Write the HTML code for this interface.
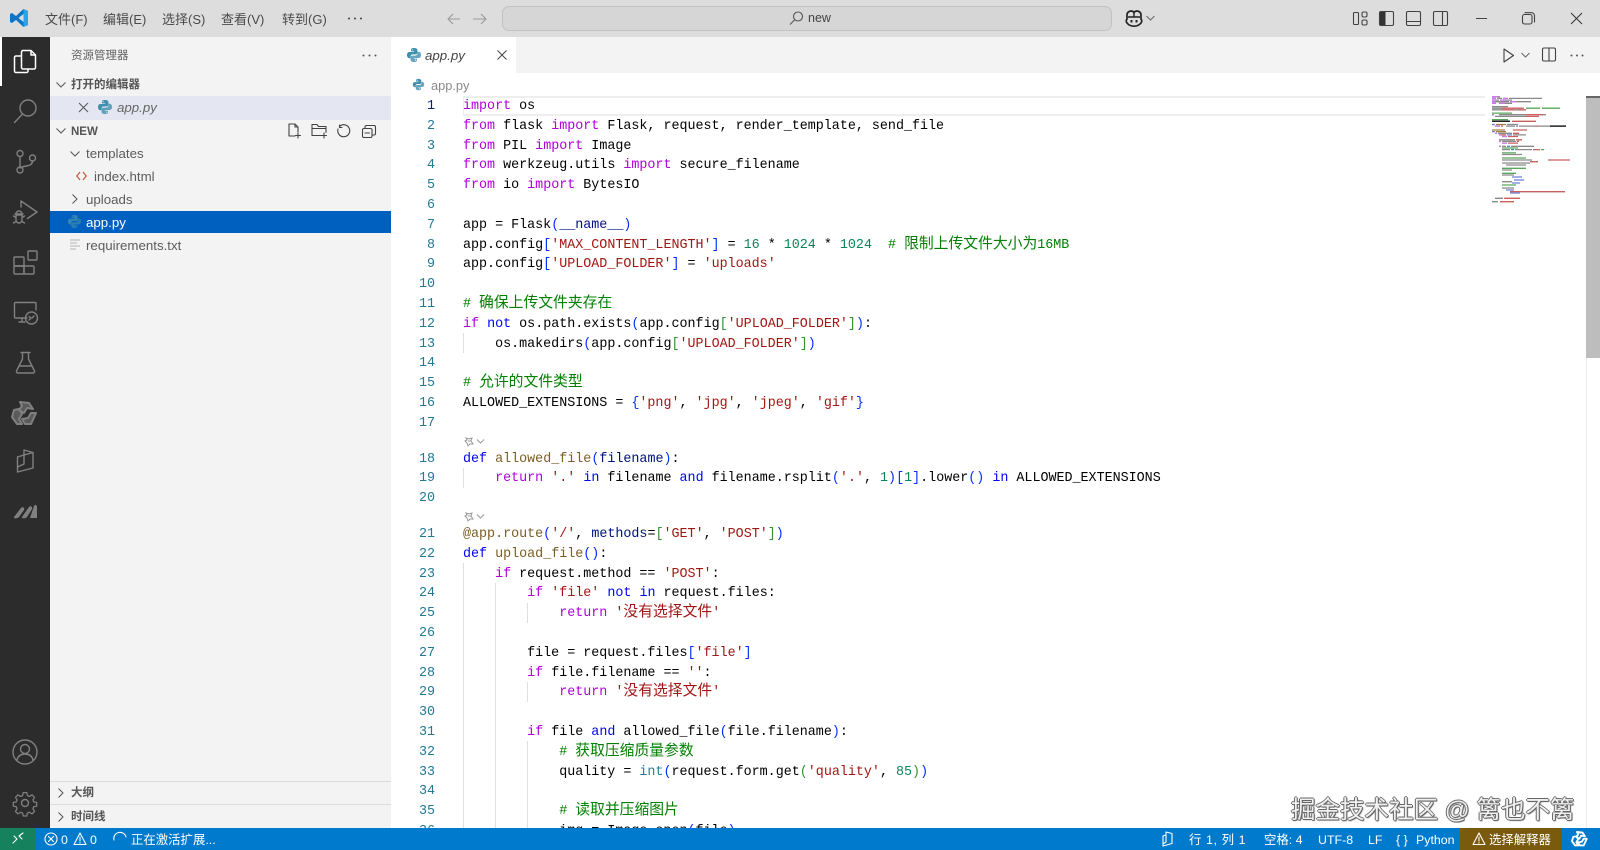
<!DOCTYPE html>
<html lang="zh"><head><meta charset="utf-8"><title>app.py</title>
<style>
*{box-sizing:border-box}
html{background:#fff}
html,body{margin:0;padding:0;width:1600px;height:850px;overflow:hidden}
body{background:#fff;font-family:"Liberation Sans","Noto Sans CJK SC",sans-serif;color:#333;filter:blur(.3px)}
.a{position:absolute}
.t{position:absolute;white-space:pre;line-height:20px;height:20px}
svg{position:absolute;overflow:visible}
.ic{fill:none;stroke:#808080;stroke-width:1.4;stroke-linecap:round;stroke-linejoin:round}
.d{fill:none;stroke:#424242;stroke-width:1.1;stroke-linecap:round;stroke-linejoin:round}
.w{fill:none;stroke:#fff;stroke-width:1.1;stroke-linecap:round;stroke-linejoin:round}
#code{position:absolute;left:0;top:97px;width:1586px;height:731px;overflow:hidden;font-family:"Liberation Mono","Noto Sans CJK SC",monospace;font-size:13.36px;color:#000}
.l{position:relative;height:19.8px;line-height:19.8px;white-space:pre;padding-left:463px}
.l i{position:absolute;left:391px;width:44px;text-align:right;font-style:normal;color:#237893}
.lens{height:16px;position:relative}
.k{color:#af00db}.b{color:#0000ff}.f{color:#795e26}.s{color:#a31515}.c{color:#008000}.n{color:#098658}.v{color:#001080}.y{color:#267f99}.p1{color:#0431fa}.p2{color:#319331}
.z{font-size:14.8px;font-family:"Noto Sans CJK SC",sans-serif;line-height:14px}
.g{position:absolute;width:1px;background:#dfdfdf}
.m{font-size:13px;color:#4a4a4a;top:10px}
.sb{font-size:12.4px;color:#fff;top:830px}
.tree{font-size:13.3px;color:#5c5c5c}
.h{font-size:11.5px;font-weight:bold;color:#555}
#wm{position:absolute;left:1291px;top:794px;font-size:24.5px;line-height:34px;white-space:pre;color:#f0f0f0;text-shadow:1px 0 0 #666,-1px 0 0 #666,0 1px 0 #666,0 -1px 0 #666,1px 1px 1px #444}
</style></head><body>
<svg width="0" height="0" style="position:absolute"><defs>
<symbol id="py" viewBox="0 0 16 16"><path fill="#3f8fae" d="M7.9 1C5.2 1 5 2.1 5 3v1.4h3.2V5H3.4C2 5 1 6.1 1 8s1 3.2 2.2 3.2H4.500V9.600c0-1.200 1-2.200 2.200-2.200h2.900c1 0 1.800-.8 1.800-1.800V3c0-1.200-1.200-2-3.500-2zM6.400 2.200a.6.600 0 110 1.200.6.600 0 010-1.200z"/><path fill="#3f8fae" opacity=".8" d="M8.100 15c2.700 0 2.900-1.100 2.900-2v-1.400H7.800V11h4.800c1.400 0 2.400-1.100 2.400-3s-1-3.200-2.200-3.200h-1.300v1.600c0 1.200-1 2.200-2.200 2.200H6.400c-1 0-1.800.8-1.800 1.800V13c0 1.200 1.200 2 3.500 2zm1.500-1.200a.6.600 0 110-1.200.6.600 0 010 1.200z"/></symbol>
</defs></svg>

<!-- title bar -->
<div class="a" style="left:0;top:0;width:1600px;height:37px;background:#dddddd"></div>
<svg style="left:9px;top:8px" width="20" height="20" viewBox="0 0 20 20"><path fill="#0f74c4" d="M14.500 1 7 8 3 5 1 6v8l2 1 4-3 7.500 7L19 17V3zM14.500 6v8L9.500 10z"/><path fill="#29a3ea" d="M14.500 1 19 3v14l-4.500 2V14V6z"/></svg>
<div class="t m" style="left:45px">文件(F)</div>
<div class="t m" style="left:103px">编辑(E)</div>
<div class="t m" style="left:162px">选择(S)</div>
<div class="t m" style="left:221px">查看(V)</div>
<div class="t m" style="left:282px">转到(G)</div>
<svg style="left:347px;top:17px" width="16" height="3"><circle cx="2" cy="1.500" r="1" fill="#444"/><circle cx="8" cy="1.500" r="1" fill="#444"/><circle cx="14" cy="1.500" r="1" fill="#444"/></svg>
<svg style="left:446px;top:11px" width="50" height="16"><path d="M14 8H2M7 3 2 8l5 5M27 8h13M35 3l5 5-5 5" fill="none" stroke="#9a9a9a" stroke-width="1.100"/></svg>
<div class="a" style="left:502px;top:6px;width:610px;height:25px;background:#d6d6d6;border:1px solid #c2c2c2;border-radius:7px"></div>
<svg style="left:788px;top:10px" width="16" height="16"><circle cx="10" cy="6.500" r="4.500" fill="none" stroke="#555" stroke-width="1.100"/><path d="M6.500 10 2 14.500" stroke="#555" stroke-width="1.100"/></svg>
<div class="t" style="left:808px;top:8px;font-size:12.500px;color:#444">new</div>
<svg style="left:1125px;top:10px" width="18" height="17" viewBox="0 0 18 17"><path d="M2 9c-1 1-1 3 0 4 2 2.500 4 3.200 7 3.200S14 15.500 16 13c1-1 1-3 0-4V5c0-2.500-2-4-4-4-1.300 0-2.400.6-3 1.500C8.400 1.600 7.300 1 6 1 4 1 2 2.500 2 5z" fill="#dddddd" stroke="#222" stroke-width="1.700"/><path d="M9 3v4M3 7h12" stroke="#222" stroke-width="1.400"/><path d="M6.500 10v2.500M11.500 10v2.500" stroke="#222" stroke-width="1.900"/></svg>
<svg style="left:1146px;top:15px" width="9" height="6"><path d="M.5 1 4.500 5 8.500 1" fill="none" stroke="#666"/></svg>
<svg style="left:1353px;top:11px" width="15" height="15"><rect x=".5" y="1.500" width="5" height="12" rx="1" class="d"/><rect x="9" y="1" width="5" height="5" rx="1.500" class="d"/><rect x="9" y="9" width="5" height="5" rx="1.500" class="d"/></svg>
<svg style="left:1379px;top:11px" width="15" height="15"><rect x=".5" y=".5" width="14" height="14" rx="1.500" class="d"/><rect x="1" y="1" width="5.500" height="13" fill="#333"/></svg>
<svg style="left:1406px;top:11px" width="15" height="15"><rect x=".5" y=".5" width="14" height="14" rx="1.500" class="d"/><path d="M1 10.500h13" class="d"/></svg>
<svg style="left:1433px;top:11px" width="15" height="15"><rect x=".5" y=".5" width="14" height="14" rx="1.500" class="d"/><path d="M9.500 1v13" class="d"/></svg>
<svg style="left:1476px;top:18px" width="11" height="2"><path d="M0 .5h11" stroke="#444" stroke-width="1"/></svg>
<svg style="left:1522px;top:12px" width="13" height="13"><rect x=".5" y="2.500" width="9.500" height="9.500" rx="2" class="d"/><path d="M3 .7h6.500a3 3 0 013 3V10" class="d"/></svg>
<svg style="left:1570px;top:12px" width="13" height="13"><path d="M1 1l11 11M12 1 1 12" stroke="#333" stroke-width="1"/></svg>

<!-- activity bar -->
<div class="a" style="left:0;top:37px;width:50px;height:791px;background:#2c2c2c"></div>
<div class="a" style="left:0;top:37px;width:2px;height:49px;background:#fff"></div>
<svg style="left:13px;top:49px" width="24" height="25" viewBox="0 0 24 25"><path d="M10 1.500h8l4.500 4.500v12.500a1.500 1.500 0 01-1.500 1.500H10a1.500 1.500 0 01-1.500-1.500V3A1.500 1.500 0 0110 1.500zM18 1.500V6h4.500M8.500 7H3A1.500 1.500 0 001.500 8.500V22A1.500 1.500 0 003 23.500h10.500a1.500 1.500 0 001.500-1.500v-2" fill="none" stroke="#fff" stroke-width="1.500" stroke-linejoin="round"/></svg>
<svg style="left:13px;top:99px" width="25" height="25"><circle cx="15" cy="9" r="8" class="ic"/><path d="M9.500 15 1.500 23.500" class="ic"/></svg>
<svg style="left:15px;top:149px" width="22" height="26"><circle cx="5" cy="4.500" r="3" class="ic"/><circle cx="5" cy="21" r="3" class="ic"/><circle cx="17.500" cy="9" r="3" class="ic"/><path d="M5 7.500v10.500M17.500 12c0 3-3 4.500-6 5s-5 1-6.500 2" class="ic"/></svg>
<svg style="left:12px;top:199px" width="26" height="26"><path d="M9 2l16 11-9.500 6.500M9 2v6" class="ic"/><path d="M3 15h8M4 15a3 3 0 016 0v1H4zM4 16h6v5a3 3 0 01-6 0zM1.500 17l2.500 1.500M12.500 17 10 18.500M1.500 24l2.500-1.500M12.500 24 10 22.500" class="ic" stroke-width="1.200"/></svg>
<svg style="left:13px;top:250px" width="25" height="25"><rect x="1" y="7" width="10" height="9" class="ic" rx="1"/><rect x="1" y="16" width="10" height="8" class="ic" rx="1"/><rect x="11" y="16" width="10" height="8" class="ic" rx="1"/><rect x="15" y="1" width="9" height="9" class="ic" rx="1"/></svg>
<svg style="left:13px;top:301px" width="25" height="24"><path d="M14 17H2.500a1 1 0 01-1-1V2.500a1 1 0 011-1H22a1 1 0 011 1V9M6 21h6M9 17v4" class="ic"/><circle cx="18.500" cy="17" r="6" class="ic"/><path d="M16 19l2-2-2-1.500M21 15l-2 2" class="ic" stroke-width="1"/></svg>
<svg style="left:15px;top:351px" width="21" height="23"><path d="M6 1.500h9M7.500 1.500V8L1.500 20a1.500 1.500 0 001.300 2h15.400a1.500 1.500 0 001.300-2l-6-12V1.500M4.500 15h12" class="ic"/></svg>
<svg style="left:12px;top:401px" width="26" height="25" viewBox="0 0 26 25"><path d="M8 1l9 1 4 6-6-1-3 5-5-3 3-4zM2 9l5-1 3 5-3 5 3 5-5 0-5-7zM24 12l-5 0-3 5-6 1 3 5 6 0z" fill="#5a5a5a" stroke="#808080" stroke-width="2" stroke-linejoin="round"/></svg>
<svg style="left:16px;top:448px" width="19" height="26"><path d="M1.500 9 8 7V2l9 2.500V20L1.500 24zM8 7l9-2.500M1.500 9v15" class="ic"/><path d="M8 7v9L1.500 19" class="ic"/></svg>
<svg style="left:13px;top:503px" width="25" height="16"><path d="M1 14 8 5c1.500-1.500 4-.5 3 2L6 14c-1 1.500-6 2-5 0zM9 14l7-10c1.500-1.500 3.500-.5 3 2l-5 8c-1 1.500-6 2-5 0zM17 15l4-12c1-2 3-1 3 1v11z" fill="#808080"/></svg>
<svg style="left:12px;top:739px" width="26" height="26"><circle cx="13" cy="13" r="12" class="ic"/><circle cx="13" cy="10" r="4.500" class="ic"/><path d="M5 21c1-4 4-6 8-6s7 2 8 6" class="ic"/></svg>
<svg style="left:12px;top:790px" width="26" height="26" viewBox="0 0 26 26"><path d="M11 1.500h4l.7 3.300 2.200.9 2.900-1.800 2.800 2.800-1.800 2.900.9 2.200 3.300.7v4l-3.300.7-.9 2.200 1.800 2.900-2.800 2.800-2.900-1.800-2.200.9-.7 3.300h-4l-.7-3.300-2.200-.9-2.900 1.800-2.800-2.800 1.800-2.900-.9-2.200-3.300-.7v-4l3.300-.7.9-2.200-1.800-2.900 2.800-2.800 2.900 1.800 2.200-.9z" class="ic" transform="translate(1.300 1.300) scale(.9)"/><circle cx="13" cy="13" r="3.500" class="ic"/></svg>

<!-- sidebar -->
<div class="a" style="left:50px;top:37px;width:341px;height:791px;background:#f3f3f3"></div>
<div class="t" style="left:71px;top:46px;font-size:11.500px;color:#616161">资源管理器</div>
<svg style="left:362px;top:54px" width="15" height="3"><circle cx="1.500" cy="1.500" r="1" fill="#555"/><circle cx="7.500" cy="1.500" r="1" fill="#555"/><circle cx="13.500" cy="1.500" r="1" fill="#555"/></svg>
<svg style="left:56px;top:82px" width="10" height="6"><path d="M.5.5 5 5 9.500.5" fill="none" stroke="#555"/></svg>
<div class="t h" style="left:71px;top:75px">打开的编辑器</div>
<div class="a" style="left:50px;top:96px;width:341px;height:24px;background:#e4e6f1"></div>
<svg style="left:78px;top:102px" width="11" height="11"><path d="M1 1l9 9M10 1l-9 9" stroke="#555" stroke-width="1"/></svg>
<svg style="left:97px;top:99px" width="16" height="16"><use href="#py"/></svg>
<div class="t tree" style="left:117px;top:98px;font-style:italic;color:#666">app.py</div>
<svg style="left:56px;top:128px" width="10" height="6"><path d="M.5.5 5 5 9.500.5" fill="none" stroke="#555"/></svg>
<div class="t" style="left:71px;top:122px;font-size:11.500px;font-weight:bold;color:#555">NEW</div>
<svg style="left:287px;top:123px" width="15" height="16"><path d="M8 13H2V1h6l3 3v5M8 1v3h3M11 10v5M8.500 12.500h5" class="d"/></svg>
<svg style="left:311px;top:123px" width="17" height="16"><path d="M10 12.500H1V1.500h5l1.500 2H15v6M1 5.500h14M13 10v5M10.500 12.500h5" class="d"/></svg>
<svg style="left:336px;top:124px" width="14" height="14"><path d="M3.500 2.500A6 6 0 112 5M3.500 1v2.500H6" class="d"/></svg>
<svg style="left:362px;top:125px" width="14" height="13"><rect x=".5" y="3.500" width="9.500" height="9" rx="1.500" class="d"/><path d="M3 3.500V2A1.500 1.500 0 014.500.5h7.500a1.500 1.500 0 011.500 1.500v6.500a1.500 1.500 0 01-1.500 1.500H10M3 8h4.500" class="d"/></svg>
<svg style="left:70px;top:151px" width="10" height="6"><path d="M.5.5 5 5 9.500.5" fill="none" stroke="#555"/></svg>
<div class="t tree" style="left:86px;top:144px">templates</div>
<svg style="left:76px;top:171px" width="11" height="10"><path d="M4 1 .8 5 4 9M7 1l3.200 4L7 9" fill="none" stroke="#c9553d" stroke-width="1.200"/></svg>
<div class="t tree" style="left:94px;top:167px">index.html</div>
<svg style="left:72px;top:194px" width="6" height="10"><path d="M.5.5 5 5 .5 9.500" fill="none" stroke="#555"/></svg>
<div class="t tree" style="left:86px;top:190px">uploads</div>
<div class="a" style="left:50px;top:211px;width:341px;height:22px;background:#0060c0"></div>
<svg style="left:67px;top:214px;opacity:.8" width="15" height="15"><use href="#py"/></svg>
<div class="t tree" style="left:86px;top:213px;color:#fff">app.py</div>
<svg style="left:70px;top:239px" width="11" height="11"><path d="M0 1h10M0 4h7M0 7h10M0 10h6" stroke="#b5b5b5" stroke-width="1"/></svg>
<div class="t tree" style="left:86px;top:236px">requirements.txt</div>
<div class="a" style="left:50px;top:781px;width:341px;height:1px;background:#dcdcdc"></div>
<div class="a" style="left:50px;top:804px;width:341px;height:1px;background:#dcdcdc"></div>
<svg style="left:58px;top:788px" width="6" height="10"><path d="M.5.5 5 5 .5 9.500" fill="none" stroke="#555"/></svg>
<div class="t h" style="left:71px;top:783px">大纲</div>
<svg style="left:58px;top:812px" width="6" height="10"><path d="M.5.5 5 5 .5 9.500" fill="none" stroke="#555"/></svg>
<div class="t h" style="left:71px;top:807px">时间线</div>

<!-- tabs -->
<div class="a" style="left:391px;top:37px;width:1209px;height:36px;background:#f3f3f3"></div>
<div class="a" style="left:391px;top:37px;width:125px;height:36px;background:#fff"></div>
<svg style="left:406px;top:47px" width="16" height="16"><use href="#py"/></svg>
<div class="t tree" style="left:425px;top:46px;font-style:italic;color:#444">app.py</div>
<svg style="left:497px;top:50px" width="10" height="10"><path d="M.5.5l9 9M9.500.5l-9 9" stroke="#444" stroke-width="1"/></svg>
<svg style="left:1503px;top:48px" width="12" height="15"><path d="M1 1l9.500 6.500L1 14z" class="d"/></svg>
<svg style="left:1521px;top:52px" width="9" height="6"><path d="M.5 1 4.500 5 8.500 1" fill="none" stroke="#666"/></svg>
<svg style="left:1542px;top:47px" width="15" height="15"><rect x=".5" y="1" width="13" height="13" rx="1.500" class="d"/><path d="M7 1v13" class="d"/></svg>
<svg style="left:1570px;top:54px" width="14" height="3"><circle cx="1.500" cy="1.500" r="1" fill="#555"/><circle cx="7" cy="1.500" r="1" fill="#555"/><circle cx="12.500" cy="1.500" r="1" fill="#555"/></svg>
<!-- breadcrumb -->
<svg style="left:412px;top:78px" width="13" height="13" viewBox="0 0 16 16"><use href="#py"/></svg>
<div class="t" style="left:431px;top:76px;font-size:12.800px;color:#8a8a8a">app.py</div>

<!-- current line -->
<div class="a" style="left:463px;top:96px;width:1022px;height:20px;border:2px solid #eeeeee;border-right:0;border-left-width:1px"></div>

<!-- guides -->
<div class="g" style="left:463px;top:333px;height:20px"></div>
<div class="g" style="left:463px;top:468px;height:20px"></div>
<div class="g" style="left:463px;top:563px;height:265px"></div>
<div class="g" style="left:495px;top:583px;height:245px"></div>
<div class="g" style="left:527px;top:603px;height:20px"></div>
<div class="g" style="left:527px;top:682px;height:20px"></div>
<div class="g" style="left:527px;top:741px;height:87px"></div>

<div id="code">
<div class="l"><i style="color:#0b216f">1</i><span class="k">import</span> os</div>
<div class="l"><i>2</i><span class="k">from</span> flask <span class="k">import</span> Flask, request, render_template, send_file</div>
<div class="l"><i>3</i><span class="k">from</span> PIL <span class="k">import</span> Image</div>
<div class="l"><i>4</i><span class="k">from</span> werkzeug.utils <span class="k">import</span> secure_filename</div>
<div class="l"><i>5</i><span class="k">from</span> io <span class="k">import</span> BytesIO</div>
<div class="l"><i>6</i></div>
<div class="l"><i>7</i>app = Flask<span class="p1">(</span><span class="v">__name__</span><span class="p1">)</span></div>
<div class="l"><i>8</i>app.config<span class="p1">[</span><span class="s">'MAX_CONTENT_LENGTH'</span><span class="p1">]</span> = <span class="n">16</span> * <span class="n">1024</span> * <span class="n">1024</span>  <span class="c"># <span class="z">限制上传文件大小为</span>16MB</span></div>
<div class="l"><i>9</i>app.config<span class="p1">[</span><span class="s">'UPLOAD_FOLDER'</span><span class="p1">]</span> = <span class="s">'uploads'</span></div>
<div class="l"><i>10</i></div>
<div class="l"><i>11</i><span class="c"># <span class="z">确保上传文件夹存在</span></span></div>
<div class="l"><i>12</i><span class="k">if</span> <span class="b">not</span> os.path.exists<span class="p1">(</span>app.config<span class="p2">[</span><span class="s">'UPLOAD_FOLDER'</span><span class="p2">]</span><span class="p1">)</span>:</div>
<div class="l"><i>13</i>    os.makedirs<span class="p1">(</span>app.config<span class="p2">[</span><span class="s">'UPLOAD_FOLDER'</span><span class="p2">]</span><span class="p1">)</span></div>
<div class="l"><i>14</i></div>
<div class="l"><i>15</i><span class="c"># <span class="z">允许的文件类型</span></span></div>
<div class="l"><i>16</i>ALLOWED_EXTENSIONS = <span class="p1">{</span><span class="s">'png'</span>, <span class="s">'jpg'</span>, <span class="s">'jpeg'</span>, <span class="s">'gif'</span><span class="p1">}</span></div>
<div class="l"><i>17</i></div>
<div class="lens"><svg style="left:464px;top:2px" width="22" height="11"><path d="M2 2l3 1 3-1-1 3 2 3-3 0-2 2-1-3-2-2 2-1zM4 5h3" fill="none" stroke="#999" stroke-width="1"/><path d="M13 3.500l3.500 3.500 3.500-3.500" fill="none" stroke="#999"/></svg></div>
<div class="l"><i>18</i><span class="b">def</span> <span class="f">allowed_file</span><span class="p1">(</span><span class="v">filename</span><span class="p1">)</span>:</div>
<div class="l"><i>19</i>    <span class="k">return</span> <span class="s">'.'</span> <span class="b">in</span> filename <span class="b">and</span> filename.rsplit<span class="p1">(</span><span class="s">'.'</span>, <span class="n">1</span><span class="p1">)[</span><span class="n">1</span><span class="p1">]</span>.lower<span class="p1">()</span> <span class="b">in</span> ALLOWED_EXTENSIONS</div>
<div class="l"><i>20</i></div>
<div class="lens"><svg style="left:464px;top:2px" width="22" height="11"><path d="M2 2l3 1 3-1-1 3 2 3-3 0-2 2-1-3-2-2 2-1zM4 5h3" fill="none" stroke="#999" stroke-width="1"/><path d="M13 3.500l3.500 3.500 3.500-3.500" fill="none" stroke="#999"/></svg></div>
<div class="l"><i>21</i><span class="f">@app.route</span><span class="p1">(</span><span class="s">'/'</span>, <span class="v">methods</span>=<span class="p2">[</span><span class="s">'GET'</span>, <span class="s">'POST'</span><span class="p2">]</span><span class="p1">)</span></div>
<div class="l"><i>22</i><span class="b">def</span> <span class="f">upload_file</span><span class="p1">()</span>:</div>
<div class="l"><i>23</i>    <span class="k">if</span> request.method == <span class="s">'POST'</span>:</div>
<div class="l"><i>24</i>        <span class="k">if</span> <span class="s">'file'</span> <span class="b">not</span> <span class="b">in</span> request.files:</div>
<div class="l"><i>25</i>            <span class="k">return</span> <span class="s">'<span class="z">没有选择文件</span>'</span></div>
<div class="l"><i>26</i></div>
<div class="l"><i>27</i>        file = request.files<span class="p1">[</span><span class="s">'file'</span><span class="p1">]</span></div>
<div class="l"><i>28</i>        <span class="k">if</span> file.filename == <span class="s">''</span>:</div>
<div class="l"><i>29</i>            <span class="k">return</span> <span class="s">'<span class="z">没有选择文件</span>'</span></div>
<div class="l"><i>30</i></div>
<div class="l"><i>31</i>        <span class="k">if</span> file <span class="b">and</span> allowed_file<span class="p1">(</span>file.filename<span class="p1">)</span>:</div>
<div class="l"><i>32</i>            <span class="c"># <span class="z">获取压缩质量参数</span></span></div>
<div class="l"><i>33</i>            quality = <span class="y">int</span><span class="p1">(</span>request.form.get<span class="p2">(</span><span class="s">'quality'</span>, <span class="n">85</span><span class="p2">)</span><span class="p1">)</span></div>
<div class="l"><i>34</i></div>
<div class="l"><i>35</i>            <span class="c"># <span class="z">读取并压缩图片</span></span></div>
<div class="l"><i>36</i>            img = Image.open<span class="p1">(</span>file<span class="p1">)</span></div>
</div>

<!-- minimap -->
<svg style="left:1490px;top:96px" width="90" height="112" fill="none" stroke-width="1.300">
<path stroke="#c97ee0" stroke-width="1.500" d="M2 .8h6M2 2.400h4M13 2.400h5M2 4.100h4M10 4.100h6M2 5.700h4M20 5.700h6M2 7.300h4M9 7.300h6M2 18.700h2M5 30.100h5M5 37.300h2M9 38.900h2M12 40.500h5M9 45.400h2M12 47.100h5M9 50.300h2"/>
<path stroke="#8a8a8a" d="M8 .8h2M7 2.400h5M19 2.400h33M6 4.100h3M16 4.100h6M6 5.700h13M26 5.700h15M15 7.300h7M2 10.600h16M2 12.200h10M32 12.200h2M2 13.800h10M25 13.800h3M9 18.700h28M53 18.700h3M5 20.400h30M17 28.500h11M16 30.100h9M29 30.100h16M48 30.100h12M8 37.300h14M23 38.900h13M9 43.800h16M12 45.400h14M12 50.300h4M21 50.300h23M12 53.600h8M25 53.600h17M12 58.500h20M12 64h30M12 67h28M16 69h20M12 74h10M12 79h12M12 85.700h10M12 92h12M5 102.300h8M2 105.700h6"/>
<path stroke="#222" stroke-width="1.500" d="M60 30.100h16M2 25.300h18"/>
<path stroke="#c95f5f" d="M12 12.200h20M12 13.800h13M28 13.800h8M37 18.700h16M35 20.400h14M22 25.300h24M11 30.100h2M45 30.100h3M12 34h3M23 34h14M23 37.300h6M11 38.900h5M18 40.500h10M26 43.800h6M27 45.400h2M18 47.100h10M43 53.600h7M58 64h22M40 65.700h8M14 102.300h16M10 105.700h14M20 95.700h55"/>
<path stroke="#58a85b" d="M36 12.200h14M52 12.200h18M2 17.100h20M2 23.600h16M12 52h16M51 53.600h3M12 56.900h14M12 62h24M12 72.300h24M12 77.300h14M12 89h14"/>
<path stroke="#6a80d8" d="M2 28.500h3M26 30.100h2M2 35.600h3M17 38.900h5M17 50.300h3M22 81h10M24 84h10M22 87h8M16 94h8M20 97h10"/>
<path stroke="#a08040" d="M6 28.500h10M2 34h10M6 35.600h10"/>
<path stroke="#2a8fa5" d="M21 53.600h3"/>
</svg>
<div class="a" style="left:1586px;top:96px;width:14px;height:732px;background:#fff;border-left:1px solid #ededed"></div>
<div class="a" style="left:1586px;top:96px;width:14px;height:262px;background:#bdbdbd;border-top:2px solid #666"></div>

<!-- watermark -->
<div id="wm">掘金技术社区 @ 篱也不篱</div>

<!-- status bar -->
<div class="a" style="left:0;top:828px;width:1600px;height:22px;background:#007acc"></div>
<div class="a" style="left:0;top:828px;width:36px;height:22px;background:#16825d"></div>
<svg style="left:12px;top:832px" width="13" height="13"><path d="M1 11l4-4-3-3M11 1 7 4l3 3" class="w"/></svg>
<svg style="left:44px;top:832px" width="14" height="14"><circle cx="7" cy="7" r="6" class="w"/><path d="M4.500 4.500l5 5M9.500 4.500l-5 5" class="w"/></svg>
<div class="t sb" style="left:61px">0</div>
<svg style="left:73px;top:832px" width="14" height="14"><path d="M7 1l6 11.500H1zM7 5v4M7 10.500v.5" class="w"/></svg>
<div class="t sb" style="left:90px">0</div>
<svg style="left:113px;top:831px" width="14" height="14"><path d="M1 9A6 6 0 0113 6" class="w"/></svg>
<div class="t sb" style="left:131px">正在激活扩展...</div>
<svg style="left:1162px;top:831px" width="12" height="16"><path d="M1 5l3-1V1l6 1.500v10L1 15zM4 4v7l-3 2" class="w"/></svg>
<div class="t sb" style="left:1189px;letter-spacing:.6px">行 1, 列 1</div>
<div class="t sb" style="left:1264px">空格: 4</div>
<div class="t sb" style="left:1318px">UTF-8</div>
<div class="t sb" style="left:1368px">LF</div>
<div class="t sb" style="left:1396px">{ }</div>
<div class="t sb" style="left:1416px">Python</div>
<div class="a" style="left:1460px;top:828px;width:102px;height:22px;background:#7a5a0c"></div>
<svg style="left:1472px;top:832px" width="14" height="14"><path d="M7 1l6 11.500H1zM7 5v4M7 10.500v.5" class="w"/></svg>
<div class="t sb" style="left:1489px">选择解释器</div>
<svg style="left:1572px;top:831px" width="16" height="16" viewBox="0 0 26 25"><path d="M8 1l9 1 4 6-6-1-3 5-5-3 3-4zM2 9l5-1 3 5-3 5 3 5-5 0-5-7zM24 12l-5 0-3 5-6 1 3 5 6 0z" fill="none" stroke="#fff" stroke-width="3" stroke-linejoin="round"/></svg>
</body></html>
